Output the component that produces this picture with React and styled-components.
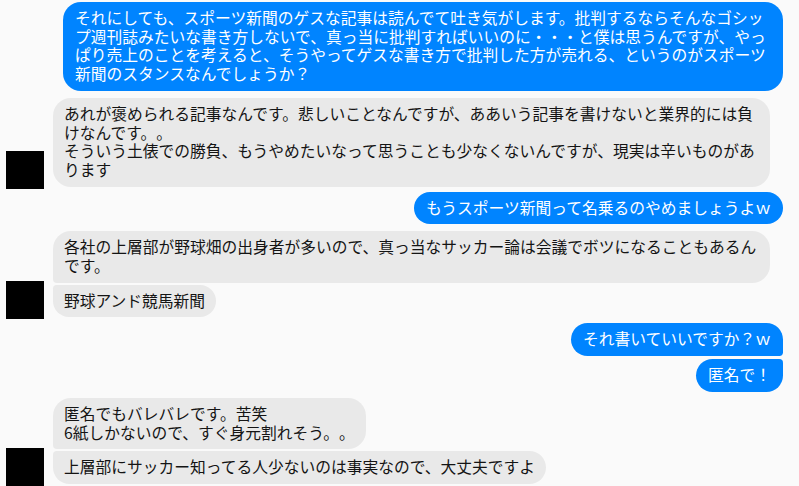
import React from 'react';
import styled, { createGlobalStyle } from 'styled-components';

const GlobalStyle = createGlobalStyle`
  html, body {
    margin: 0;
    padding: 0;
    background: #fafafa;
  }
  body {
    font-family: "Noto Sans CJK JP", "Noto Sans", sans-serif;
  }
`;

const StyledThread = styled.div`
  display: flex;
  flex-direction: column;
  width: 799px;
  height: 486px;
  box-sizing: border-box;
  padding: 2px 16px 0 6px;
  overflow: hidden;
`;

const StyledGroup = styled.div`
  display: flex;
  align-items: flex-end;
  justify-content: ${({ $mine }) => ($mine ? 'flex-end' : 'flex-start')};
  gap: 9px;
  margin-top: ${({ $gap }) => $gap}px;

  &:first-child {
    margin-top: 0;
  }
`;

const StyledAvatar = styled.div`
  flex: none;
  width: 38px;
  height: 38px;
  margin-bottom: -2px;
  background: #000;
`;

const StyledStack = styled.div`
  display: flex;
  flex-direction: column;
  align-items: ${({ $mine }) => ($mine ? 'flex-end' : 'flex-start')};
  gap: ${({ $mine }) => ($mine ? 3 : 2)}px;
`;

const StyledBubble = styled.div`
  box-sizing: border-box;
  max-width: ${({ $mine }) => ($mine ? 720 : 717)}px;
  padding: 7px ${({ $mine }) => ($mine ? '12px 7px 12px' : '11px 7px 11px')};
  border-radius: 18px;
  background: ${({ $mine }) => ($mine ? '#0084ff' : '#e9e9e9')};
  color: ${({ $mine }) => ($mine ? '#fff' : '#141414')};
  font-size: 15.75px;
  line-height: 18.7px;
  white-space: pre-line;
  text-spacing-trim: space-all;
  letter-spacing: 0;

  ${({ $mine, $pos }) => {
    const side = $mine ? 'right' : 'left';
    if ($pos === 'first') return `border-bottom-${side}-radius: 4px;`;
    if ($pos === 'last') return `border-top-${side}-radius: 4px;`;
    if ($pos === 'middle') return `border-top-${side}-radius: 4px; border-bottom-${side}-radius: 4px;`;
    return '';
  }}
`;

const groups = [
  {
    mine: true,
    gap: 0,
    texts: [
      'それにしても、スポーツ新聞のゲスな記事は読んでて吐き気がします。批判するならそんなゴシップ週刊誌みたいな書き方しないで、真っ当に批判すればいいのに・・・と僕は思うんですが、やっぱり売上のことを考えると、そうやってゲスな書き方で批判した方が売れる、というのがスポーツ新聞のスタンスなんでしょうか？',
    ],
  },
  {
    mine: false,
    gap: 7,
    texts: [
      'あれが褒められる記事なんです。悲しいことなんですが、ああいう記事を書けないと業界的には負けなんです。。\nそういう土俵での勝負、もうやめたいなって思うことも少なくないんですが、現実は辛いものがあります',
    ],
  },
  {
    mine: true,
    gap: 5,
    texts: ['もうスポーツ新聞って名乗るのやめましょうよｗ'],
  },
  {
    mine: false,
    gap: 7,
    texts: [
      '各社の上層部が野球畑の出身者が多いので、真っ当なサッカー論は会議でボツになることもあるんです。',
      '野球アンド競馬新聞',
    ],
  },
  {
    mine: true,
    gap: 6,
    texts: ['それ書いていいですか？ｗ', '匿名で！'],
  },
  {
    mine: false,
    gap: 6,
    texts: [
      '匿名でもバレバレです。苦笑\n6紙しかないので、すぐ身元割れそう。。',
      '上層部にサッカー知ってる人少ないのは事実なので、大丈夫ですよ',
    ],
  },
];

const position = (i, n) => {
  if (n === 1) return 'single';
  if (i === 0) return 'first';
  if (i === n - 1) return 'last';
  return 'middle';
};

const App = () => (
  <>
    <GlobalStyle />
    <StyledThread>
      {groups.map((group, g) => (
        <StyledGroup key={g} $mine={group.mine} $gap={group.gap}>
          {!group.mine && <StyledAvatar />}
          <StyledStack $mine={group.mine}>
            {group.texts.map((text, i) => (
              <StyledBubble key={i} $mine={group.mine} $pos={position(i, group.texts.length)}>
                {text}
              </StyledBubble>
            ))}
          </StyledStack>
        </StyledGroup>
      ))}
    </StyledThread>
  </>
);

export default App;
